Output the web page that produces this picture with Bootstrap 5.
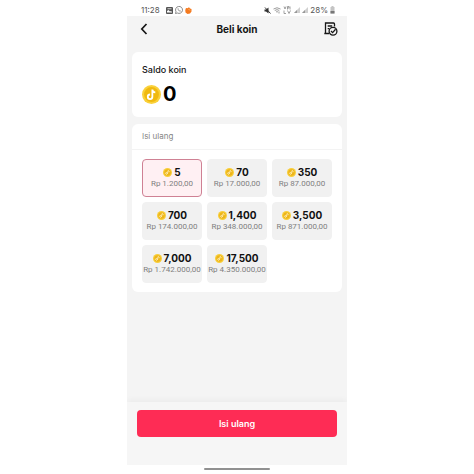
<!DOCTYPE html>
<html lang="id">
<head>
<meta charset="utf-8">
<meta name="viewport" content="width=device-width, initial-scale=1">
<title>Beli koin</title>
<link href="https://cdn.jsdelivr.net/npm/bootstrap@5.3.0/dist/css/bootstrap.min.css" rel="stylesheet">
<style>
body { font-family: Inter, "Noto Sans", sans-serif; font-size: 9px; line-height: 12px; color: #161616; background: #fff; }
svg { display: block; flex: none; }
.phone { max-width: 220px; }
.status { height: 16px; padding: 4px 12px 0 14px; color: #555; font-size: 8px; }
.status-group { gap: 2px; }
.screen { background: #f4f4f4; }
.topbar { display: grid; grid-template-columns: 16px 1fr 16px; padding: 4px 9px 14px; }
.topbar h1 { font-size: 10px; line-height: 18px; font-weight: 700; }
.bare { background: none; border: 0; padding: 0; color: #161616; }
.panels { padding: 0 5px; gap: 7px; }
.panel { background: #fff; border-radius: 6px; }
.balance { padding: 12px 10px 13px; }
.balance h2 { font-size: 9px; line-height: 12px; font-weight: 500; }
.amount { gap: 2px; font-size: 20px; line-height: 20px; font-weight: 700; color: #000; }
.panel-title { padding: 6px 10px 7px; font-size: 8px; line-height: 12px; font-weight: 400; color: #858585; border-bottom: 1px solid #f3f3f3; }
.packs { display: grid; grid-template-columns: repeat(3, minmax(0, 1fr)); gap: 5px; padding: 9px 10px 9px; }
.pack { height: 38px; border: 1px solid #f1f1f1; border-radius: 4px; background: #f1f1f1; cursor: pointer; white-space: nowrap; }
.pack-coins { gap: 2px; font-size: 10px; line-height: 12px; font-weight: 700; color: #111; }
.pack-price { font-family: Roboto, sans-serif; font-size: 8px; line-height: 12px; color: #808080; }
.btn-check:checked + .pack { background: #fff0f3; border-color: #cf8194; }
.bottom { background: #f6f6f6; padding: 8px 10px 28px; box-shadow: 0 -2px 6px rgba(0,0,0,.04); clip-path: inset(-8px 0 0 0); }
.pay { --bs-btn-bg: #fe2c55; --bs-btn-color: #fff; --bs-btn-hover-bg: #e8274d; --bs-btn-hover-color: #fff; --bs-btn-padding-y: 6px; --bs-btn-font-size: 9px; --bs-btn-line-height: 13px; --bs-btn-font-weight: 600; --bs-btn-border-radius: 4px; }
.home { padding: 3px 0 4px; }
.home span { width: 66px; height: 2px; border-radius: 1px; background: #919191; }
</style>
<script src="https://cdn.jsdelivr.net/npm/bootstrap@5.3.0/dist/js/bootstrap.bundle.min.js" defer></script>
</head>
<body>
<svg width="0" height="0" class="position-absolute" aria-hidden="true">
  <symbol id="coin" viewBox="0 0 20 20">
    <circle cx="10" cy="10" r="10" fill="#fad13a"/>
    <circle cx="10" cy="10" r="7.8" fill="#f0b90f"/>
    <path d="M10.9 4.8v7.6a2.4 2.4 0 1 1-2.4-2.4M10.9 4.8c.2 1.8 1.4 2.9 3.1 3" fill="none" stroke="#fff" stroke-width="1.9"/>
  </symbol>
  <symbol id="coin-mini" viewBox="0 0 20 20">
    <circle cx="10" cy="10" r="10" fill="#f8cf3c"/>
    <circle cx="10" cy="10" r="7.2" fill="#edb51a"/>
    <path d="M11.6 5.4 9.8 13M12 6l2.6 2.2M9.8 12.6a2 2 0 1 1-1.6-2.8" fill="none" stroke="#fff3c4" stroke-width="2"/>
  </symbol>
</svg>
<div class="phone mx-auto min-vh-100 d-flex flex-column">
  <div class="status d-flex justify-content-between">
    <div class="status-group d-flex align-items-center">
      <span class="me-1">11:28</span>
      <svg width="7" height="7" viewBox="0 0 14 14"><rect width="14" height="14" rx="2" fill="#555"/><path d="M2 11V8l3-2 3 3 2-1 2 2v1z" fill="#fff"/><path d="M3 3.5h8" stroke="#fff" stroke-width="1.5"/></svg>
      <svg width="8" height="8" viewBox="0 0 16 16" fill="none" stroke="#666" stroke-width="1.5"><path d="M1 15l1-3.7A7 7 0 1 1 4.8 14z"/><path d="M5.2 4.8c-.5 3 2.8 6.6 6 6.3l.3-1.7-2-.8-.9.8c-1-.5-1.7-1.2-2-2.2l.7-.9-.7-1.7z" fill="#777" stroke="none"/></svg>
      <svg width="7" height="7" viewBox="0 0 14 14"><path d="M2 2l3 .5L8 .5 10 3l3 1v5l-3 4-5 1-4-3L.5 6z" fill="#f47a20"/><path d="M7 4l3 3" stroke="#ffb36a" stroke-width="2"/></svg>
    </div>
    <div class="status-group d-flex align-items-center">
      <svg width="7" height="7" viewBox="0 0 14 14"><path d="M1 5h3l5-4v12L4 9H1z" fill="#333"/><path d="M2 1l11 12" stroke="#333" stroke-width="2"/></svg>
      <svg width="8" height="7" viewBox="0 0 16 14" fill="none" stroke="#8a8a8a" stroke-width="1.7"><path d="M1 4q7-5 14 0M3.5 7q4.5-3.5 9 0M6 10q2-1.5 4 0M12 9v4"/></svg>
      <svg width="9" height="8" viewBox="0 0 18 16" fill="none" stroke="#8a8a8a" stroke-width="1.6"><path d="M2 1l2 5 2-5M9 7V1h3v3H9M14 1v6M2 9v6h4M9 9l3 6 3-6"/></svg>
      <svg width="6" height="6" viewBox="0 0 12 12"><path d="M0 12 12 0v12z" fill="#d0d0d0"/><path d="M0 12l6-6v6z" fill="#999"/></svg>
      <svg width="6" height="6" viewBox="0 0 12 12"><path d="M0 12 12 0v12z" fill="#d0d0d0"/><path d="M0 12l6-6v6z" fill="#999"/></svg>
      <span>28%</span>
      <svg width="5" height="8" viewBox="0 0 10 16"><path d="M3 0h4v2h2v13H1V2h2z" fill="#c4c4c4"/><path d="M1 10h8v5H1z" fill="#777"/></svg>
    </div>
  </div>
  <main class="screen flex-grow-1 d-flex flex-column">
    <header class="topbar align-items-center">
      <button type="button" class="bare" aria-label="Kembali"><svg width="16" height="16" viewBox="0 0 16 16" fill="none" stroke="currentColor" stroke-width="1.7"><path d="M10.5 3 5.8 8l4.7 5"/></svg></button>
      <h1 class="m-0 text-center">Beli koin</h1>
      <button type="button" class="bare" aria-label="Riwayat transaksi"><svg width="16" height="16" viewBox="0 0 16 16" fill="none" stroke="currentColor" stroke-width="1.3"><path d="M12.5 5.500V3a1 1 0 0 0-1-1H3.500v10.500H7M3.500 12.500H2.300M5.700 5h4.500M5.700 7.600h1.500"/><circle cx="11" cy="10.300" r="3.900"/><path d="M9 10l1.600 1.600 3-3.300"/></svg></button>
    </header>
    <div class="panels d-flex flex-column">
      <section class="panel balance">
        <h2 class="mb-2">Saldo koin</h2>
        <div class="amount d-flex align-items-center"><svg width="19" height="19"><use href="#coin"/></svg>0</div>
      </section>
      <section class="panel">
        <h2 class="panel-title m-0">Isi ulang</h2>
        <div class="packs" role="radiogroup" aria-label="Isi ulang">
          <div><input class="btn-check" type="radio" name="pack" id="p1" checked><label class="pack d-flex flex-column align-items-center justify-content-center" for="p1"><span class="pack-coins d-flex align-items-center"><svg width="9" height="9"><use href="#coin-mini"/></svg>5</span><span class="pack-price">Rp 1.200,00</span></label></div>
          <div><input class="btn-check" type="radio" name="pack" id="p2"><label class="pack d-flex flex-column align-items-center justify-content-center" for="p2"><span class="pack-coins d-flex align-items-center"><svg width="9" height="9"><use href="#coin-mini"/></svg>70</span><span class="pack-price">Rp 17.000,00</span></label></div>
          <div><input class="btn-check" type="radio" name="pack" id="p3"><label class="pack d-flex flex-column align-items-center justify-content-center" for="p3"><span class="pack-coins d-flex align-items-center"><svg width="9" height="9"><use href="#coin-mini"/></svg>350</span><span class="pack-price">Rp 87.000,00</span></label></div>
          <div><input class="btn-check" type="radio" name="pack" id="p4"><label class="pack d-flex flex-column align-items-center justify-content-center" for="p4"><span class="pack-coins d-flex align-items-center"><svg width="9" height="9"><use href="#coin-mini"/></svg>700</span><span class="pack-price">Rp 174.000,00</span></label></div>
          <div><input class="btn-check" type="radio" name="pack" id="p5"><label class="pack d-flex flex-column align-items-center justify-content-center" for="p5"><span class="pack-coins d-flex align-items-center"><svg width="9" height="9"><use href="#coin-mini"/></svg>1,400</span><span class="pack-price">Rp 348.000,00</span></label></div>
          <div><input class="btn-check" type="radio" name="pack" id="p6"><label class="pack d-flex flex-column align-items-center justify-content-center" for="p6"><span class="pack-coins d-flex align-items-center"><svg width="9" height="9"><use href="#coin-mini"/></svg>3,500</span><span class="pack-price">Rp 871.000,00</span></label></div>
          <div><input class="btn-check" type="radio" name="pack" id="p7"><label class="pack d-flex flex-column align-items-center justify-content-center" for="p7"><span class="pack-coins d-flex align-items-center"><svg width="9" height="9"><use href="#coin-mini"/></svg>7,000</span><span class="pack-price">Rp 1.742.000,00</span></label></div>
          <div><input class="btn-check" type="radio" name="pack" id="p8"><label class="pack d-flex flex-column align-items-center justify-content-center" for="p8"><span class="pack-coins d-flex align-items-center"><svg width="9" height="9"><use href="#coin-mini"/></svg>17,500</span><span class="pack-price">Rp 4.350.000,00</span></label></div>
        </div>
      </section>
    </div>
    <footer class="bottom mt-auto">
      <button type="button" class="btn pay w-100">Isi ulang</button>
    </footer>
  </main>
  <div class="home d-flex justify-content-center"><span></span></div>
</div>
</body>
</html>
